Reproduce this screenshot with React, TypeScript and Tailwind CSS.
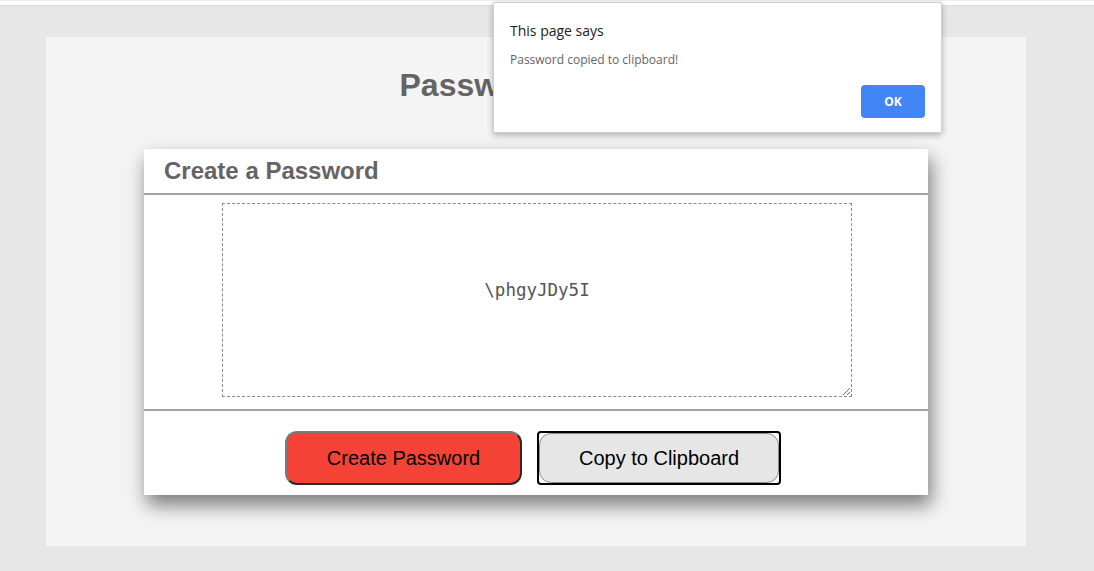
import React from 'react';

const App: React.FC = () => {
  const password = '\\phgyJDy5I';

  return (
    <div className="relative min-h-[571px] bg-[#e7e7e7] font-['Liberation_Sans',Arial,sans-serif]">
      {/* browser strip above page */}
      <div className="h-[6px] bg-white border-t border-t-[#f1f1f1] border-b border-b-[#dcdcdc]" />

      <div className="ml-[46px] mt-[31px] h-[509px] w-[980px] bg-[#f4f4f4]">
        <h1 className="pt-[30px] pl-10 text-center text-[32px] leading-[37px] font-bold text-[#646464]">
          Password Generator
        </h1>

        <div className="mx-auto mt-[45px] w-[784px] bg-white shadow-[3px_10px_18px_rgba(0,0,0,0.5)]">
          {/* card header */}
          <div className="h-[46px] border-b-2 border-[#a3a3a3] px-[20px]">
            <h2 className="text-[24px] leading-[44px] font-bold text-[#646464]">Create a Password</h2>
          </div>

          {/* card body */}
          <div className="flex justify-center border-b-2 border-[#a3a3a3] pt-[8px] pb-[12px]">
            <textarea
              readOnly
              value={password}
              className="ml-[2px] h-[194px] w-[630px] border border-dashed border-[#8a8a8a] pt-[76px] text-center font-['DejaVu_Sans_Mono',monospace] text-[17.5px] leading-[20px] text-[#555] outline-none"
            />
          </div>

          {/* card footer */}
          <div className="flex justify-center gap-[15px] pt-[20px] pb-[10px] pr-[6px]">
            <button className="h-[54px] w-[237px] rounded-[12px] border-2 border-t-[#7a7a7a] border-l-[#7a7a7a] border-r-[#2a2a2a] border-b-[#2a2a2a] bg-[#f44336] text-[20px] text-black">
              Create Password
            </button>
            <div className="h-[54px] w-[244px] rounded-[4px] border-2 border-black">
              <button className="h-full w-full rounded-[12px] border border-[#8a8a8a] bg-[#e6e6e6] text-[20px] text-black">
                Copy to Clipboard
              </button>
            </div>
          </div>
        </div>
      </div>

      {/* alert dialog */}
      <div className="absolute left-[493px] top-[2px] h-[131px] w-[449px] rounded-[2px] border border-[#d0d0d0] bg-white px-[16px] shadow-[0_2px_6px_rgba(0,0,0,0.3)] font-['Open_Sans',sans-serif]">
        <div className="pt-[18px] text-[14px] leading-[20px] text-[#202124]">This page says</div>
        <div className="pt-[11px] text-[12px] leading-[16px] text-[#5f6368]">Password copied to clipboard!</div>
        <div className="flex justify-end pt-[17px]">
          <button className="h-[33px] w-[64px] rounded-[4px] bg-[#4285f4] text-[12px] font-bold text-white">OK</button>
        </div>
      </div>
    </div>
  );
};

export default App;
